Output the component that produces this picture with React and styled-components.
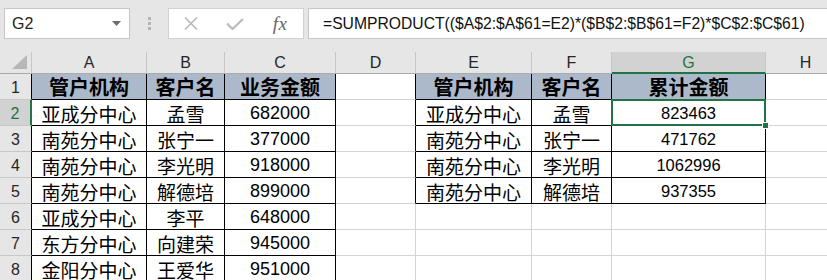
import React from "react";
import styled, { createGlobalStyle } from "styled-components";

const GREEN = "#217346";
const GRID = "#d4d4d4";
const CJK = `"Noto Sans CJK SC", "Noto Sans", sans-serif`;
const LATIN = `"Liberation Sans", Arial, sans-serif`;

const GlobalStyle = createGlobalStyle`
	* { box-sizing: border-box; }
	body {
		margin: 0;
		background: #fff;
		overflow: hidden;
		font-family: ${LATIN};
	}
`;

const Page = styled.div`
	width: 827px;
	height: 280px;
	overflow: hidden;
`;
// 名称框 + 编辑栏
const Toolbar = styled.div`
	display: flex;
	align-items: flex-start;
	height: 52px;
	padding: 8px 0 0 4px;
	background: #e6e6e6;
`;
const NameBox = styled.div`
	display: flex;
	align-items: center;
	justify-content: space-between;
	width: 126px;
	height: 31px;
	padding: 0 8px 0 7px;
	background: #fff;
	border: 1px solid #c6c6c6;
	font-size: 16px;
	color: #222;
`;
const Grip = styled.div`
	display: flex;
	flex-direction: column;
	align-items: center;
	gap: 2px;
	width: 38px;
	padding-top: 9px;
	& > span {
		width: 3px;
		height: 3px;
		background: #b4b4b4;
	}
`;
const FuncBox = styled.div`
	display: flex;
	align-items: center;
	width: 136px;
	height: 31px;
	background: #fff;
	border: 1px solid #d2d2d2;
`;
const FuncSlot = styled.div`
	display: flex;
	align-items: center;
	justify-content: center;
	width: ${(p) => p.$w}px;
	height: 100%;
`;
const Fx = styled.span`
	font-family: "Liberation Serif", "Times New Roman", serif;
	font-style: italic;
	font-size: 19px;
	color: #666;
	letter-spacing: 0.5px;
`;
const Formula = styled.div`
	flex: 1;
	display: flex;
	align-items: center;
	height: 31px;
	margin-left: 4px;
	padding-left: 14px;
	background: #fff;
	border: 1px solid #c6c6c6;
	border-right: none;
	font-size: 15.7px;
	color: #111;
	white-space: nowrap;
`;

// 表格区
const Sheet = styled.div`
	display: grid;
	grid-template-columns: 32px 115px 78px 111px 80px 116px 80px 154px 80px;
	grid-template-rows: 22px repeat(8, 26px);
	width: 846px;
`;
const Corner = styled.div`
	display: flex;
	align-items: flex-end;
	justify-content: flex-end;
	padding: 0 4px 4px 0;
	background: #e6e6e6;
	border-right: 1px solid #c6c6c6;
	border-bottom: 1px solid #ababab;
`;
const ColHead = styled.div`
	display: flex;
	align-items: center;
	justify-content: center;
	padding-top: 1px;
	background: ${(p) => (p.$sel ? "#d2d2d2" : "#e6e6e6")};
	color: ${(p) => (p.$sel ? GREEN : "#262626")};
	border-right: 1px solid #c6c6c6;
	border-bottom: ${(p) => (p.$sel ? `2px solid ${GREEN}` : "1px solid #ababab")};
	font-size: 16px;
`;
const RowHead = styled.div`
	display: flex;
	align-items: center;
	justify-content: center;
	padding-top: 3px;
	background: ${(p) => (p.$sel ? "#d2d2d2" : "#e6e6e6")};
	color: ${(p) => (p.$sel ? GREEN : "#262626")};
	border-right: ${(p) =>
		p.$sel ? `2px solid ${GREEN}` : p.$edge ? "1px solid #000" : "1px solid #c6c6c6"};
	border-bottom: 1px solid #c8c8c8;
	font-size: 16px;
`;
const Cell = styled.div`
	position: relative;
	z-index: ${(p) => (p.$active ? 2 : 0)};
	display: flex;
	align-items: center;
	justify-content: center;
	padding-top: ${(p) => (p.$head ? 0 : 2)}px;
	background: ${(p) => (p.$head ? "#acb9ca" : "#fff")};
	border-right: 1px solid ${(p) => (p.$rb ? "#000" : GRID)};
	border-bottom: 1px solid ${(p) => (p.$bb ? "#000" : GRID)};
	color: #000;
	white-space: nowrap;
	font-family: ${(p) => (p.$num ? LATIN : CJK)};
	font-size: ${(p) => (p.$head ? 20 : p.$num ? p.$numSize : 19)}px;
	font-weight: ${(p) => (p.$head ? 700 : 400)};
`;
// 活动单元格选框
const Selection = styled.div`
	position: absolute;
	inset: -1px;
	border: 2px solid ${GREEN};
	pointer-events: none;
`;
const Handle = styled.div`
	position: absolute;
	right: -5px;
	bottom: -5px;
	width: 7px;
	height: 7px;
	background: ${GREEN};
	border: 1px solid #fff;
`;

const COLS = ["A", "B", "C", "D", "E", "F", "G", "H"];

const ROWS = [
	["管户机构", "客户名", "业务金额", "", "管户机构", "客户名", "累计金额", ""],
	["亚成分中心", "孟雪", "682000", "", "亚成分中心", "孟雪", "823463", ""],
	["南苑分中心", "张宁一", "377000", "", "南苑分中心", "张宁一", "471762", ""],
	["南苑分中心", "李光明", "918000", "", "南苑分中心", "李光明", "1062996", ""],
	["南苑分中心", "解德培", "899000", "", "南苑分中心", "解德培", "937355", ""],
	["亚成分中心", "李平", "648000", "", "", "", "", ""],
	["东方分中心", "向建荣", "945000", "", "", "", "", ""],
	["金阳分中心", "王爱华", "951000", "", "", "", "", ""],
];

// r: 1-based row, c: 1-based column (A = 1)
const inTable = (r, c) =>
	(c >= 1 && c <= 3 && r >= 1 && r <= 9) || (c >= 5 && c <= 7 && r >= 1 && r <= 5);

const ACTIVE = { r: 2, c: 7 };

function FuncIcons() {
	return (
		<FuncBox>
			<FuncSlot $w={44}>
				<svg width="14" height="13" viewBox="0 0 14 13">
					<path d="M1 0.5 L13 12.5 M13 0.5 L1 12.5" stroke="#b9b9b9" strokeWidth="1.6" fill="none" />
				</svg>
			</FuncSlot>
			<FuncSlot $w={44}>
				<svg width="18" height="12" viewBox="0 0 18 12">
					<path d="M1 5.5 L6.5 11 L17 1" stroke="#bdbdbd" strokeWidth="2.4" fill="none" />
				</svg>
			</FuncSlot>
			<FuncSlot $w={46}>
				<Fx>fx</Fx>
			</FuncSlot>
		</FuncBox>
	);
}

export default function App() {
	return (
		<>
			<GlobalStyle />
			<Page>
				{/* 编辑栏 */}
				<Toolbar>
					<NameBox>
						<span>G2</span>
						<svg width="9" height="5" viewBox="0 0 9 5">
							<path d="M0 0 H9 L4.5 5 Z" fill="#6d6d6d" />
						</svg>
					</NameBox>
					<Grip>
						<span />
						<span />
						<span />
					</Grip>
					<FuncIcons />
					<Formula>=SUMPRODUCT(($A$2:$A$61=E2)*($B$2:$B$61=F2)*$C$2:$C$61)</Formula>
				</Toolbar>
				{/* 工作表 */}
				<Sheet>
					<Corner>
						<svg width="15" height="14" viewBox="0 0 15 14">
							<path d="M15 0 V14 H0 Z" fill="#b7b7b7" />
						</svg>
					</Corner>
					{COLS.map((col, i) => (
						<ColHead key={col} $sel={i + 1 === ACTIVE.c}>
							{col}
						</ColHead>
					))}
					{ROWS.map((row, ri) => {
						const r = ri + 1;
						return (
							<React.Fragment key={r}>
								<RowHead $sel={r === ACTIVE.r} $edge={inTable(r, 1)}>
									{r}
								</RowHead>
								{row.map((val, ci) => {
									const c = ci + 1;
									const isNum = /^\d+$/.test(val);
									const active = r === ACTIVE.r && c === ACTIVE.c;
									return (
										<Cell
											key={c}
											$head={r === 1 && inTable(r, c)}
											$rb={inTable(r, c) || inTable(r, c + 1)}
											$bb={inTable(r, c) || inTable(r + 1, c)}
											$num={isNum}
											$numSize={c > 4 ? 16.5 : 18}
											$active={active}
										>
											{val}
											{active && (
												<Selection>
													<Handle />
												</Selection>
											)}
										</Cell>
									);
								})}
							</React.Fragment>
						);
					})}
				</Sheet>
			</Page>
		</>
	);
}
